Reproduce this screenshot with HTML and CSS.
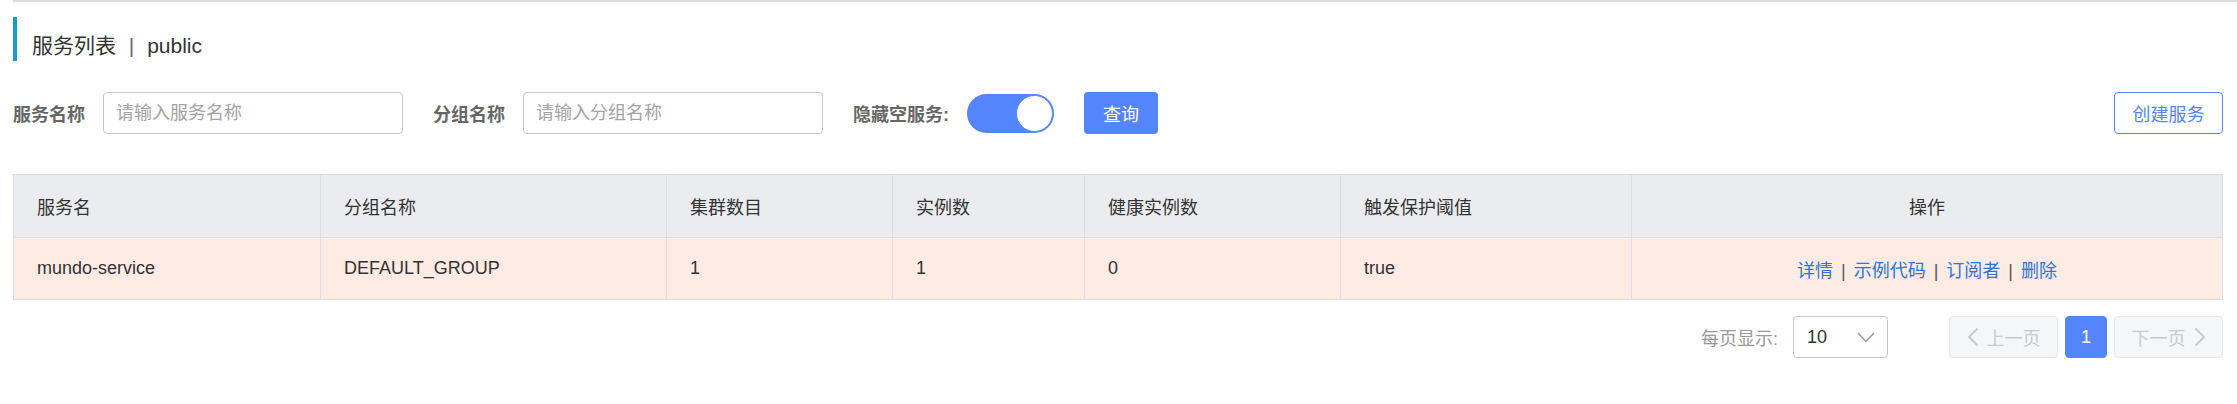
FILE: index.html
```html
<!DOCTYPE html>
<html lang="zh-CN">
<head>
<meta charset="utf-8">
<title>服务列表</title>
<link rel="stylesheet" href="styles.css">
</head>
<body>
<div class="page">
  <div class="topline"></div>
  <h1 class="title">服务列表 <span class="title-sep">|</span> public</h1>

  <div class="search">
    <div class="search-left">
      <label class="lbl">服务名称</label>
      <input class="inp" type="text" placeholder="请输入服务名称">
      <label class="lbl lbl-gap">分组名称</label>
      <input class="inp" type="text" placeholder="请输入分组名称">
      <label class="lbl lbl-gap">隐藏空服务:</label>
      <div class="toggle"><span class="knob"></span></div>
      <button class="btn-primary">查询</button>
    </div>
    <button class="btn-outline">创建服务</button>
  </div>

  <table class="grid">
    <colgroup>
      <col style="width:307px">
      <col style="width:346px">
      <col style="width:226px">
      <col style="width:192px">
      <col style="width:256px">
      <col style="width:291px">
      <col>
    </colgroup>
    <thead>
      <tr>
        <th>服务名</th>
        <th>分组名称</th>
        <th>集群数目</th>
        <th>实例数</th>
        <th>健康实例数</th>
        <th>触发保护阈值</th>
        <th class="center">操作</th>
      </tr>
    </thead>
    <tbody>
      <tr>
        <td>mundo-service</td>
        <td>DEFAULT_GROUP</td>
        <td>1</td>
        <td>1</td>
        <td>0</td>
        <td>true</td>
        <td class="center ops"><a>详情</a><span class="sep">|</span><a>示例代码</a><span class="sep">|</span><a>订阅者</a><span class="sep">|</span><a>删除</a></td>
      </tr>
    </tbody>
  </table>

  <div class="pager">
    <span class="pager-lbl">每页显示:</span>
    <div class="select"><span>10</span>
      <svg class="chev" width="18" height="11" viewBox="0 0 18 11"><path d="M1 1 L9 9.5 L17 1" fill="none" stroke="#999" stroke-width="1.5"/></svg>
    </div>
    <div class="pages">
      <button class="pg pg-dis"><svg width="12" height="20" viewBox="0 0 12 20"><path d="M10.5 1.5 L2 10 L10.5 18.5" fill="none" stroke="#c8cacd" stroke-width="2"/></svg><span>上一页</span></button>
      <button class="pg pg-cur">1</button>
      <button class="pg pg-dis"><span>下一页</span><svg width="12" height="20" viewBox="0 0 12 20"><path d="M1.5 1.5 L10 10 L1.5 18.5" fill="none" stroke="#c8cacd" stroke-width="2"/></svg></button>
    </div>
  </div>
</div>
</body>
</html>
```

FILE: styles.css
```css
* { box-sizing: border-box; }
html, body { margin: 0; padding: 0; background: #fff; }
body {
  font-family: "Liberation Sans", "Noto Sans CJK SC", sans-serif;
  font-size: 18px;
  color: #333;
}
.page { padding: 0 14px 0 13px; }
.topline { height: 2px; background: #dcdcdc; margin-right: -14px; }

.title {
  margin: 15px 0 0 0;
  height: 44px;
  border-left: 4px solid #1a9bd0;
  padding: 14px 0 0 15px;
  font-size: 21px;
  line-height: 30px;
  font-weight: normal;
  color: #333;
}
.title-sep { color: #666; margin: 0 7px; }

.search {
  margin-top: 31px;
  height: 42px;
  display: flex;
  align-items: center;
  justify-content: space-between;
}
.search-left { display: flex; align-items: center; }
.lbl { font-weight: bold; color: #666; font-size: 18px; margin-right: 18px; }
.lbl-gap { margin-left: 30px; }
.inp {
  width: 300px;
  height: 42px;
  border: 1px solid #c4c6cf;
  border-radius: 4px;
  padding: 0 12px;
  font-family: inherit;
  font-size: 18px;
  color: #333;
  outline: none;
}
.inp::placeholder { color: #a3a3a3; }

.toggle {
  width: 87px;
  height: 39px;
  border-radius: 20px;
  background: #5584ff;
  display: flex;
  align-items: center;
  justify-content: flex-end;
  margin-right: 30px;
}
.knob {
  width: 37px;
  height: 37px;
  border-radius: 50%;
  background: #fff;
  border: 1px solid #5584ff;
  margin-right: 1px;
}
.btn-primary {
  width: 74px;
  height: 42px;
  border: none;
  border-radius: 4px;
  background: #5584ff;
  color: #fff;
  font-family: inherit;
  font-size: 18px;
  padding: 0;
}
.btn-outline {
  width: 109px;
  height: 42px;
  border: 1px solid #5584ff;
  border-radius: 4px;
  background: #fff;
  color: #5584ff;
  font-family: inherit;
  font-size: 18px;
  padding: 0;
}

.grid {
  margin-top: 40px;
  width: 100%;
  border-collapse: collapse;
  table-layout: fixed;
  border: 1px solid #dcdee3;
}
.grid th, .grid td {
  border: 1px solid #dcdee3;
  text-align: left;
  padding: 0 0 0 23px;
  font-weight: normal;
  color: #333;
  font-size: 18px;
}
.grid th { background: #ebecf0; height: 63px; }
.grid td { background: #feebe4; height: 62px; }
.grid .center { text-align: center; padding: 0; }
.ops a { color: #2a76dd; }
.ops .sep { color: #555; margin: 0 8px; }

.pager {
  margin-top: 16px;
  height: 42px;
  display: flex;
  align-items: center;
  justify-content: flex-end;
}
.pager-lbl { color: #999; font-size: 18px; margin-right: 15px; }
.select {
  width: 95px;
  height: 42px;
  border: 1px solid #c4c6cf;
  border-radius: 4px;
  display: flex;
  align-items: center;
  justify-content: space-between;
  padding: 0 12px 0 13px;
  color: #333;
  font-size: 18px;
}
.pages { display: flex; align-items: center; gap: 7px; margin-left: 61px; }
.pg {
  height: 42px;
  border-radius: 4px;
  font-family: inherit;
  font-size: 18px;
  padding: 0;
  display: flex;
  align-items: center;
  justify-content: center;
  gap: 8px;
}
.pg-dis {
  width: 109px;
  background: #f5f6f8;
  border: 1px solid #e6e7eb;
  color: #c8cacd;
}
.pg-cur {
  width: 42px;
  background: #5584ff;
  border: 1px solid #5584ff;
  color: #fff;
}
```
